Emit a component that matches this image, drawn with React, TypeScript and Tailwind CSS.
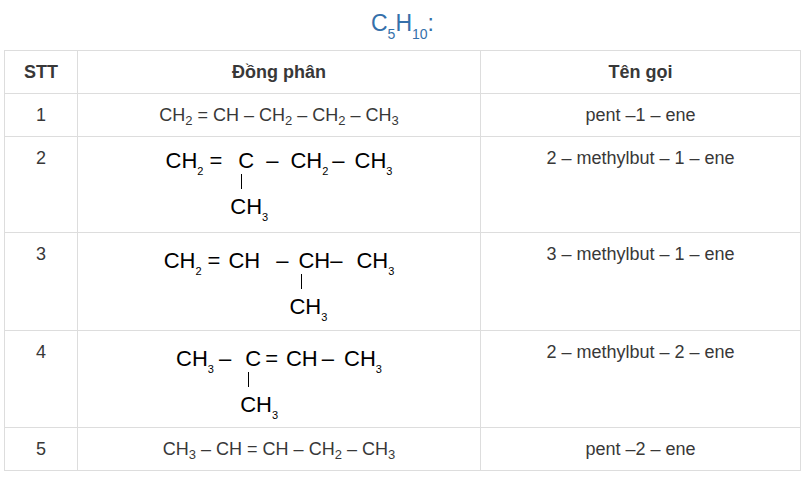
import React from 'react'

const cellFont = "font-['Liberation_Sans',Arial,sans-serif]"

function Sub({ children }: { children: React.ReactNode }) {
  return <span className="align-[-4px] text-[13px]">{children}</span>
}

function Tiny({ children }: { children: React.ReactNode }) {
  return <span className="align-[-7px] text-[11px]">{children}</span>
}

// carbon atom with a methyl branch hanging below it
function Branch({ atom, shift = '-ml-[8px]' }: { atom: string; shift?: string }) {
  return (
    <div className="flex flex-col">
      <span>{atom}</span>
      <span className="ml-[3px] mt-[2px] h-[15px] w-px bg-black" />
      <span className={`${shift} mt-[7px] w-0 whitespace-nowrap`}>
        CH<Tiny>3</Tiny>
      </span>
    </div>
  )
}

function Bond({ s, cls }: { s: string; cls: string }) {
  return <span className={cls}>{s}</span>
}

function Struct2() {
  return (
    <div className="inline-flex items-start text-[22px] leading-[22px] text-black">
      <span>
        CH<Tiny>2</Tiny>
      </span>
      <Bond s="=" cls="ml-[6px] mr-[16px]" />
      <Branch atom="C" />
      <Bond s="–" cls="mx-[12px]" />
      <span>
        CH<Tiny>2</Tiny>
      </span>
      <Bond s="–" cls="ml-[4px] mr-[10px]" />
      <span>
        CH<Tiny>3</Tiny>
      </span>
    </div>
  )
}

function Struct3() {
  return (
    <div className="inline-flex items-start text-[22px] leading-[22px] text-black">
      <span>
        CH<Tiny>2</Tiny>
      </span>
      <Bond s="=" cls="ml-[6px] mr-[8px]" />
      <span>CH</span>
      <Bond s="–" cls="ml-[16px] mr-[10px]" />
      <div className="flex">
        <Branch atom="C" shift="-ml-[9px]" />
        <span>H</span>
      </div>
      <Bond s="–" cls="mr-[14px]" />
      <span>
        CH<Tiny>3</Tiny>
      </span>
    </div>
  )
}

function Struct4() {
  return (
    <div className="inline-flex items-start text-[22px] leading-[22px] text-black">
      <span>
        CH<Tiny>3</Tiny>
      </span>
      <Bond s="–" cls="ml-[5px] mr-[14px]" />
      <Branch atom="C" shift="-ml-[5px]" />
      <Bond s="=" cls="ml-[4px] mr-[8px]" />
      <span>CH</span>
      <Bond s="–" cls="ml-[4px] mr-[10px]" />
      <span>
        CH<Tiny>3</Tiny>
      </span>
    </div>
  )
}

const td = 'border border-[#ddd] px-2 pt-[8px] align-top text-center'
const th = 'border border-[#ddd] text-center align-middle font-bold'

export default function App() {
  return (
    <div className={`min-h-[481px] w-[805px] bg-white pt-[8px] ${cellFont}`}>
      <h2 className="text-center text-[23px] leading-[30px] text-[#3570aa]">
        C<sub className="align-[-4px] text-[14px]">5</sub>H
        <sub className="align-[-4px] text-[14px]">10</sub>:
      </h2>
      <table className="ml-[4px] mt-[12px] w-[797px] table-fixed border-collapse border border-[#ddd] text-[18px] leading-[26px] text-[#383838]">
        <colgroup>
          <col className="w-[73px]" />
          <col className="w-[403px]" />
          <col />
        </colgroup>
        <thead>
          <tr className="h-[43px]">
            <th className={th}>STT</th>
            <th className={th}>Đồng phân</th>
            <th className={th}>Tên gọi</th>
          </tr>
        </thead>
        <tbody>
          <tr className="h-[43px]">
            <td className={td}>1</td>
            <td className={td}>
              CH<Sub>2</Sub> = CH – CH<Sub>2</Sub> – CH<Sub>2</Sub> – CH<Sub>3</Sub>
            </td>
            <td className={td}>pent –1 – ene</td>
          </tr>
          <tr className="h-[96px]">
            <td className={`${td} pt-[6px]`}>2</td>
            <td className={`${td} pt-[12px]`}>
              <Struct2 />
            </td>
            <td className={`${td} pt-[6px]`}>2 – methylbut – 1 – ene</td>
          </tr>
          <tr className="h-[98px]">
            <td className={`${td} pt-[6px]`}>3</td>
            <td className={`${td} pt-[16px]`}>
              <Struct3 />
            </td>
            <td className={`${td} pt-[6px]`}>3 – methylbut – 1 – ene</td>
          </tr>
          <tr className="h-[97px]">
            <td className={`${td} pt-[6px]`}>4</td>
            <td className={`${td} pt-[16px]`}>
              <Struct4 />
            </td>
            <td className={`${td} pt-[6px]`}>2 – methylbut – 2 – ene</td>
          </tr>
          <tr className="h-[43px]">
            <td className={td}>5</td>
            <td className={td}>
              CH<Sub>3</Sub> – CH = CH – CH<Sub>2</Sub> – CH<Sub>3</Sub>
            </td>
            <td className={td}>pent –2 – ene</td>
          </tr>
        </tbody>
      </table>
    </div>
  )
}
